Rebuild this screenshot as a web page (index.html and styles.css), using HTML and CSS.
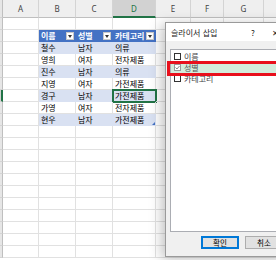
FILE: index.html
```html
<!DOCTYPE html>
<html lang="ko">
<head>
  <meta charset="UTF-8" />
  <title>슬라이서 삽입</title>
  <link rel="stylesheet" href="styles.css">
</head>
<body>
  <div class="sheet">
    <div class="row heads">
      <span class="rh"></span><span>A</span><span>B</span><span>C</span><span class="cur">D</span><span>E</span><span>F</span><span>G</span><span></span>
    </div>
    <div class="row"><span class="rh"></span><span></span><span></span><span></span><span></span><span></span><span></span><span></span><span></span></div>
    <div class="row">
      <span class="rh"></span><span></span>
      <span class="th">이름<i class="dd"></i></span>
      <span class="th">성별<i class="dd"></i></span>
      <span class="th">카테고리<i class="dd"></i></span>
      <span></span><span></span><span></span><span></span>
    </div>
    <div class="row"><span class="rh"></span><span></span><span class="band">철수</span><span class="band">남자</span><span class="band">의류</span><span></span><span></span><span></span><span></span></div>
    <div class="row"><span class="rh"></span><span></span><span>영희</span><span>여자</span><span>전자제품</span><span></span><span></span><span></span><span></span></div>
    <div class="row"><span class="rh"></span><span></span><span class="band">진수</span><span class="band">남자</span><span class="band">의류</span><span></span><span></span><span></span><span></span></div>
    <div class="row"><span class="rh"></span><span></span><span>지영</span><span>여자</span><span>가전제품</span><span></span><span></span><span></span><span></span></div>
    <div class="row"><span class="rh cur"></span><span></span><span class="band">경구</span><span class="band">남자</span><span class="band sel">가전제품</span><span></span><span></span><span></span><span></span></div>
    <div class="row"><span class="rh"></span><span></span><span>가영</span><span>여자</span><span>전자제품</span><span></span><span></span><span></span><span></span></div>
    <div class="row"><span class="rh"></span><span></span><span class="band">현우</span><span class="band">남자</span><span class="band handle">가전제품</span><span></span><span></span><span></span><span></span></div>
    <div class="row"><span class="rh"></span><span></span><span></span><span></span><span></span><span></span><span></span><span></span><span></span></div>
    <div class="row"><span class="rh"></span><span></span><span></span><span></span><span></span><span></span><span></span><span></span><span></span></div>
    <div class="row"><span class="rh"></span><span></span><span></span><span></span><span></span><span></span><span></span><span></span><span></span></div>
    <div class="row"><span class="rh"></span><span></span><span></span><span></span><span></span><span></span><span></span><span></span><span></span></div>
    <div class="row"><span class="rh"></span><span></span><span></span><span></span><span></span><span></span><span></span><span></span><span></span></div>
    <div class="row"><span class="rh"></span><span></span><span></span><span></span><span></span><span></span><span></span><span></span><span></span></div>
    <div class="row"><span class="rh"></span><span></span><span></span><span></span><span></span><span></span><span></span><span></span><span></span></div>
    <div class="row"><span class="rh"></span><span></span><span></span><span></span><span></span><span></span><span></span><span></span><span></span></div>
    <div class="row"><span class="rh"></span><span></span><span></span><span></span><span></span><span></span><span></span><span></span><span></span></div>
    <div class="row"><span class="rh"></span><span></span><span></span><span></span><span></span><span></span><span></span><span></span><span></span></div>
    <div class="row"><span class="rh"></span><span></span><span></span><span></span><span></span><span></span><span></span><span></span><span></span></div>
  </div>

  <!-- 슬라이서 삽입 대화상자 -->
  <div class="dialog">
    <div class="title">
      <span class="name">슬라이서 삽입</span>
      <span class="help">?</span>
      <span class="close">✕</span>
    </div>
    <div class="body">
      <div class="list">
        <div class="item"><span class="cb"></span>이름</div>
        <div class="item on">
          <span class="cb checked"><svg width="5" height="5" viewBox="0 0 5 5"><polyline points="0.5,2.5 2,4 4.5,1" fill="none" stroke="#8a8a8a" stroke-width="1"/></svg></span>성별
        </div>
        <div class="item"><span class="cb"></span>카테고리</div>
      </div>
      <div class="buttons">
        <button class="ok">확인</button>
        <button>취소</button>
      </div>
    </div>
    <div class="mark"></div>
  </div>
</body>
</html>
```

FILE: styles.css
```css
html, body {
  margin: 0;
  overflow: hidden;
}
body {
  width: 276px;
  height: 260px;
  position: relative;
  background: #fff;
  font-family: "Noto Sans CJK KR", "Noto Sans", sans-serif;
  color: #000;
}
.sheet {
  display: flex;
  flex-direction: column;
}
.row {
  display: grid;
  grid-template-columns: 3px 36px 37px 37px 43px 35px 33px 40px 40px;
  height: 12px;
}
.row > span {
  box-sizing: border-box;
  border-right: 1px solid #e1e1e1;
  border-bottom: 1px solid #e1e1e1;
  font-size: 8px;
  line-height: 11px;
  padding-left: 2px;
  white-space: nowrap;
  overflow: hidden;
}
.row > .rh {
  padding: 0;
  background: #e6e6e6;
  border-right-color: #bfbfbf;
  border-bottom-color: #d4d4d4;
}
.row > .rh.cur {
  background: #d2d2d2;
  border-right: 2px solid #217346;
}

/* column letters */
.heads {
  height: 18px;
}
.heads > span {
  background: #efefef;
  border-right-color: #d4d4d4;
  border-bottom-color: #bfbfbf;
  padding: 0;
  text-align: center;
  font-family: "Noto Sans", sans-serif;
  font-size: 8px;
  line-height: 17px;
  color: #444;
}
.heads > .cur {
  background: #d2d2d2;
  color: #217346;
  border-bottom: 2px solid #217346;
}

/* table */
.row > .th {
  display: flex;
  align-items: center;
  justify-content: space-between;
  padding-right: 1px;
  background: #4472c4;
  border-color: #4472c4;
  color: #fff;
  font-weight: bold;
}
.dd {
  flex: none;
  position: relative;
  width: 8px;
  height: 8px;
  box-sizing: border-box;
  background: #fff;
  border: 1px solid #c8c8c8;
}
.dd::after {
  content: "";
  position: absolute;
  left: 1px;
  top: 2px;
  border-top: 3px solid #333;
  border-left: 2px solid transparent;
  border-right: 2px solid transparent;
}
.row > .band {
  background: #d9e1f2;
  border-color: #d9e1f2;
}
.row > .sel {
  outline: 2px solid #217346;
  outline-offset: -1px;
}
.row > .handle {
  position: relative;
}
.handle::after {
  content: "";
  position: absolute;
  right: 0;
  bottom: 0;
  border-bottom: 3px solid #4472c4;
  border-left: 3px solid transparent;
}

/* dialog */
.dialog {
  position: absolute;
  left: 165px;
  top: 22px;
  width: 125px;
  height: 235px;
  box-sizing: border-box;
  background: #f0f0f0;
  border: 1px solid #9a9a9a;
  box-shadow: -3px 2px 12px rgba(0, 0, 0, 0.25);
  font-size: 8px;
}
.title {
  display: flex;
  align-items: center;
  height: 18px;
  padding: 0 9px 0 5px;
  background: #fff;
  color: #222;
}
.title .name {
  flex: 1;
}
.title .help {
  width: 10px;
  text-align: center;
}
.title .close {
  width: 10px;
  margin-left: 12px;
  text-align: center;
}
.body {
  padding: 8px 5px 0 4px;
}
.list {
  height: 183px;
  box-sizing: border-box;
  padding-top: 1px;
  background: #fff;
  border: 1px solid #abadb3;
}
.item {
  display: flex;
  align-items: center;
  height: 11px;
  color: #444;
}
.item.on {
  background: #d3ecdc;
  color: #555;
}
.cb {
  display: flex;
  align-items: center;
  justify-content: center;
  width: 7px;
  height: 7px;
  box-sizing: border-box;
  margin: 0 3px 0 3px;
  background: #fff;
  border: 1px solid #333;
}
.cb.checked {
  border-color: #9a9a9a;
}
.buttons {
  display: flex;
  gap: 6px;
  margin-top: 4px;
  padding-left: 31px;
}
.buttons button {
  width: 38px;
  height: 13px;
  padding: 0;
  font-family: inherit;
  font-size: 7.5px;
  line-height: 11px;
  color: #000;
  background: #e1e1e1;
  border: 1px solid #adadad;
}
.buttons .ok {
  border-color: #0078d7;
  box-shadow: inset 0 0 0 1px #0078d7;
}
.mark {
  position: absolute;
  left: 1px;
  top: 38px;
  width: 200px;
  height: 15px;
  box-sizing: border-box;
  border: 3px solid #e8101c;
}
```
